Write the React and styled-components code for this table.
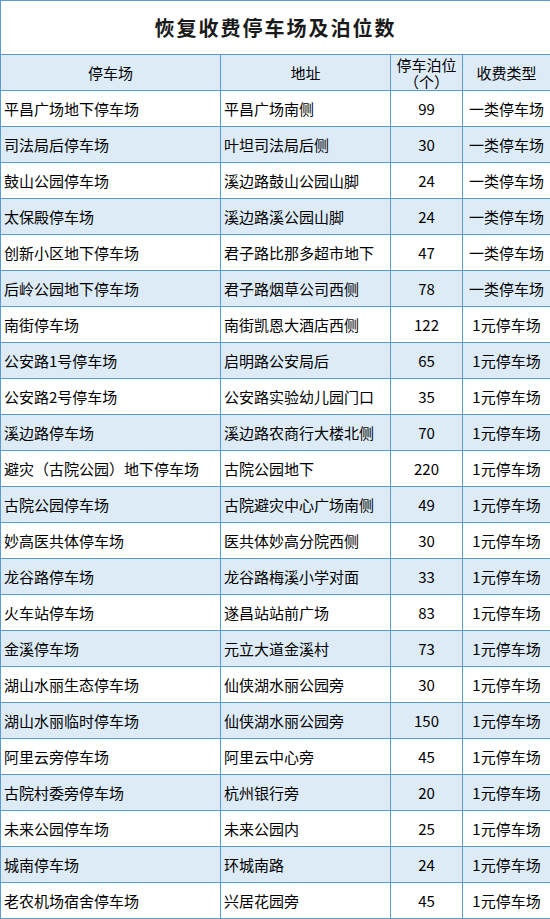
import React from 'react'
import styled, { createGlobalStyle } from 'styled-components'

const rows = [
  ['平昌广场地下停车场', '平昌广场南侧', '99', '一类停车场'],
  ['司法局后停车场', '叶坦司法局后侧', '30', '一类停车场'],
  ['鼓山公园停车场', '溪边路鼓山公园山脚', '24', '一类停车场'],
  ['太保殿停车场', '溪边路溪公园山脚', '24', '一类停车场'],
  ['创新小区地下停车场', '君子路比那多超市地下', '47', '一类停车场'],
  ['后岭公园地下停车场', '君子路烟草公司西侧', '78', '一类停车场'],
  ['南街停车场', '南街凯恩大酒店西侧', '122', '1元停车场'],
  ['公安路1号停车场', '启明路公安局后', '65', '1元停车场'],
  ['公安路2号停车场', '公安路实验幼儿园门口', '35', '1元停车场'],
  ['溪边路停车场', '溪边路农商行大楼北侧', '70', '1元停车场'],
  ['避灾（古院公园）地下停车场', '古院公园地下', '220', '1元停车场'],
  ['古院公园停车场', '古院避灾中心广场南侧', '49', '1元停车场'],
  ['妙高医共体停车场', '医共体妙高分院西侧', '30', '1元停车场'],
  ['龙谷路停车场', '龙谷路梅溪小学对面', '33', '1元停车场'],
  ['火车站停车场', '遂昌站站前广场', '83', '1元停车场'],
  ['金溪停车场', '元立大道金溪村', '73', '1元停车场'],
  ['湖山水丽生态停车场', '仙侠湖水丽公园旁', '30', '1元停车场'],
  ['湖山水丽临时停车场', '仙侠湖水丽公园旁', '150', '1元停车场'],
  ['阿里云旁停车场', '阿里云中心旁', '45', '1元停车场'],
  ['古院村委旁停车场', '杭州银行旁', '20', '1元停车场'],
  ['未来公园停车场', '未来公园内', '25', '1元停车场'],
  ['城南停车场', '环城南路', '24', '1元停车场'],
  ['老农机场宿舍停车场', '兴居花园旁', '45', '1元停车场'],
]

const GlobalStyle = createGlobalStyle`
  body {
    margin: 0;
    background: #ffffff;
    font-family: "Noto Sans CJK SC", "Liberation Sans", sans-serif;
  }
`

const Table = styled.table`
  width: 550px;
  table-layout: fixed;
  border-collapse: collapse;
  color: #000;
  font-size: 15px;
`

const Title = styled.th`
  height: 53px;
  padding: 0;
  border: 1px solid #5b9bd5;
  font-size: 20px;
  font-weight: 700;
  letter-spacing: 2px;
  color: #1a1a1a;
  text-align: center;
`

const Row = styled.tr`
  height: 36px;
  background: ${p => (p.$shaded ? '#ddebf7' : '#ffffff')};
`

const Cell = styled.td`
  padding: 0 3px;
  border: 1px solid #5b9bd5;
  text-align: ${p => p.$align || 'left'};
  white-space: nowrap;
  overflow: hidden;
  line-height: 17px;
`

const Head = styled(Cell).attrs({ as: 'th' })`
  font-weight: 400;
  text-align: center;
`

const HeadLine = styled.span`
  display: block;
  line-height: 17px;
`

export default function App() {
  return (
    <>
      <GlobalStyle />
      <Table>
        <colgroup>
          <col style={{ width: 220 }} />
          <col style={{ width: 170 }} />
          <col style={{ width: 72 }} />
          <col style={{ width: 88 }} />
        </colgroup>
        <thead>
          <tr>
            <Title colSpan={4}>恢复收费停车场及泊位数</Title>
          </tr>
          <Row $shaded>
            <Head>停车场</Head>
            <Head>地址</Head>
            <Head>
              <HeadLine>停车泊位</HeadLine>
              <HeadLine>（个）</HeadLine>
            </Head>
            <Head>收费类型</Head>
          </Row>
        </thead>
        <tbody>
          {rows.map((r, i) => (
            <Row key={i} $shaded={i % 2 === 1}>
              <Cell>{r[0]}</Cell>
              <Cell>{r[1]}</Cell>
              <Cell $align="center">{r[2]}</Cell>
              <Cell $align="center">{r[3]}</Cell>
            </Row>
          ))}
        </tbody>
      </Table>
    </>
  )
}
